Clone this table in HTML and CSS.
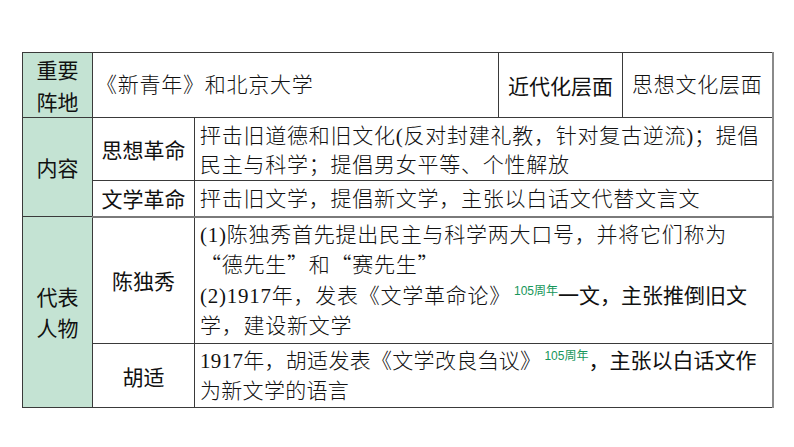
FILE: index.html
```html
<!DOCTYPE html>
<html lang="zh-CN">
<head>
<meta charset="utf-8">
<link rel="stylesheet" href="styles.css">
</head>
<body>
<table class="tbl">
  <colgroup>
    <col class="c1"><col class="c2"><col class="c3"><col class="c4"><col class="c5">
  </colgroup>
  <tr class="r1">
    <td class="lab two">重要<br>阵地</td>
    <td class="body first" colspan="2">《新青年》和北京大学</td>
    <td class="sub">近代化层面</td>
    <td class="body ctr">思想文化层面</td>
  </tr>
  <tr class="r2">
    <td class="lab" rowspan="2">内容</td>
    <td class="sub">思想革命</td>
    <td class="body" colspan="3">抨击旧道德和旧文化(反对封建礼教，针对复古逆流)；提倡<br>民主与科学；提倡男女平等、个性解放</td>
  </tr>
  <tr class="r3">
    <td class="sub">文学革命</td>
    <td class="body" colspan="3">抨击旧文学，提倡新文学，主张以白话文代替文言文</td>
  </tr>
  <tr class="r4">
    <td class="lab two" rowspan="2">代表<br>人物</td>
    <td class="sub">陈独秀</td>
    <td class="body" colspan="3">(1)陈独秀首先提出民主与科学两大口号，并将它们称为<br><span class="q">“</span>德先生<span class="q">”</span>和<span class="q">“</span>赛先生<span class="q">”</span><br>(2)1917年，发表《文学革命论》<sup class="tag">105周年</sup><span class="hl">一文，主张推倒旧文</span><br>学，建设新文学</td>
  </tr>
  <tr class="r5">
    <td class="sub">胡适</td>
    <td class="body" colspan="3">1917年，胡适发表《文学改良刍议》<sup class="tag">105周年</sup><span class="hl">，主张以白话文作</span><br>为新文学的语言</td>
  </tr>
</table>
</body>
</html>
```
FILE: styles.css
```css
html, body {
  margin: 0;
  padding: 0;
  background: #ffffff;
}
body {
  width: 794px;
  height: 447px;
  overflow: hidden;
}
.tbl {
  margin: 52px 0 0 22px;
  width: 750px;
  border-collapse: collapse;
  table-layout: fixed;
  border-top: 1px solid #333;
  border-left: 1px solid #333;
  border-bottom: 1px solid #333;
  border-right: 2px solid #8a8a8a;
  color: #111;
}
.c1 { width: 70px; }
.c2 { width: 102px; }
.c3 { width: 304px; }
.c4 { width: 124px; }
.c5 { width: 150px; }
.tbl td {
  border: 1px solid #3a3a3a;
  padding: 0 0 0 5px;
  vertical-align: middle;
  white-space: nowrap;
  overflow: visible;
}
.r1 { height: 64px; }
.r2 { height: 63px; }
.r3 { height: 36px; }
.r4 { height: 127px; }
.r5 { height: 64px; }
.r3 td { border-bottom: 2px solid #7a7a7a; }
.lab {
  background: #c4e3d3;
  text-align: center;
  padding: 0 !important;
  font-family: "Noto Sans CJK SC", sans-serif;
  font-size: 21px;
  line-height: 31px;
  font-weight: 400;
}
.r1 .lab { line-height: 32px; }
.sub {
  text-align: center;
  padding: 0 !important;
  font-family: "Noto Sans CJK SC", sans-serif;
  font-size: 21px;
  font-weight: 400;
  line-height: 30px;
}
.body {
  font-family: "Liberation Serif", "Noto Sans CJK SC", serif;
  font-weight: 300;
  font-size: 21px;
  letter-spacing: 0.75px;
  line-height: 29px;
}
.r2 .body { padding-top: 4px; }
.r3 .body { line-height: 30px; padding-top: 2px; }
.r4 .body { line-height: 30.5px; padding-top: 1px; }
.r5 .body { line-height: 30px; letter-spacing: 0.3px; }
.first { padding-left: 3px !important; }
.ctr { text-align: center; padding: 0 !important; }
.q {
  font-family: "Noto Sans CJK SC", sans-serif;
  line-height: 1;
}
.hl {
  font-family: "Noto Sans CJK SC", sans-serif;
  font-weight: 400;
  letter-spacing: 0;
  line-height: 1;
}
.tag {
  font-family: "Liberation Sans", "Noto Sans CJK SC", sans-serif;
  font-size: 12px;
  font-weight: 400;
  color: #16965a;
  letter-spacing: 0;
  vertical-align: 8px;
  line-height: 0;
  margin: 0 0 0 3px;
}
```
